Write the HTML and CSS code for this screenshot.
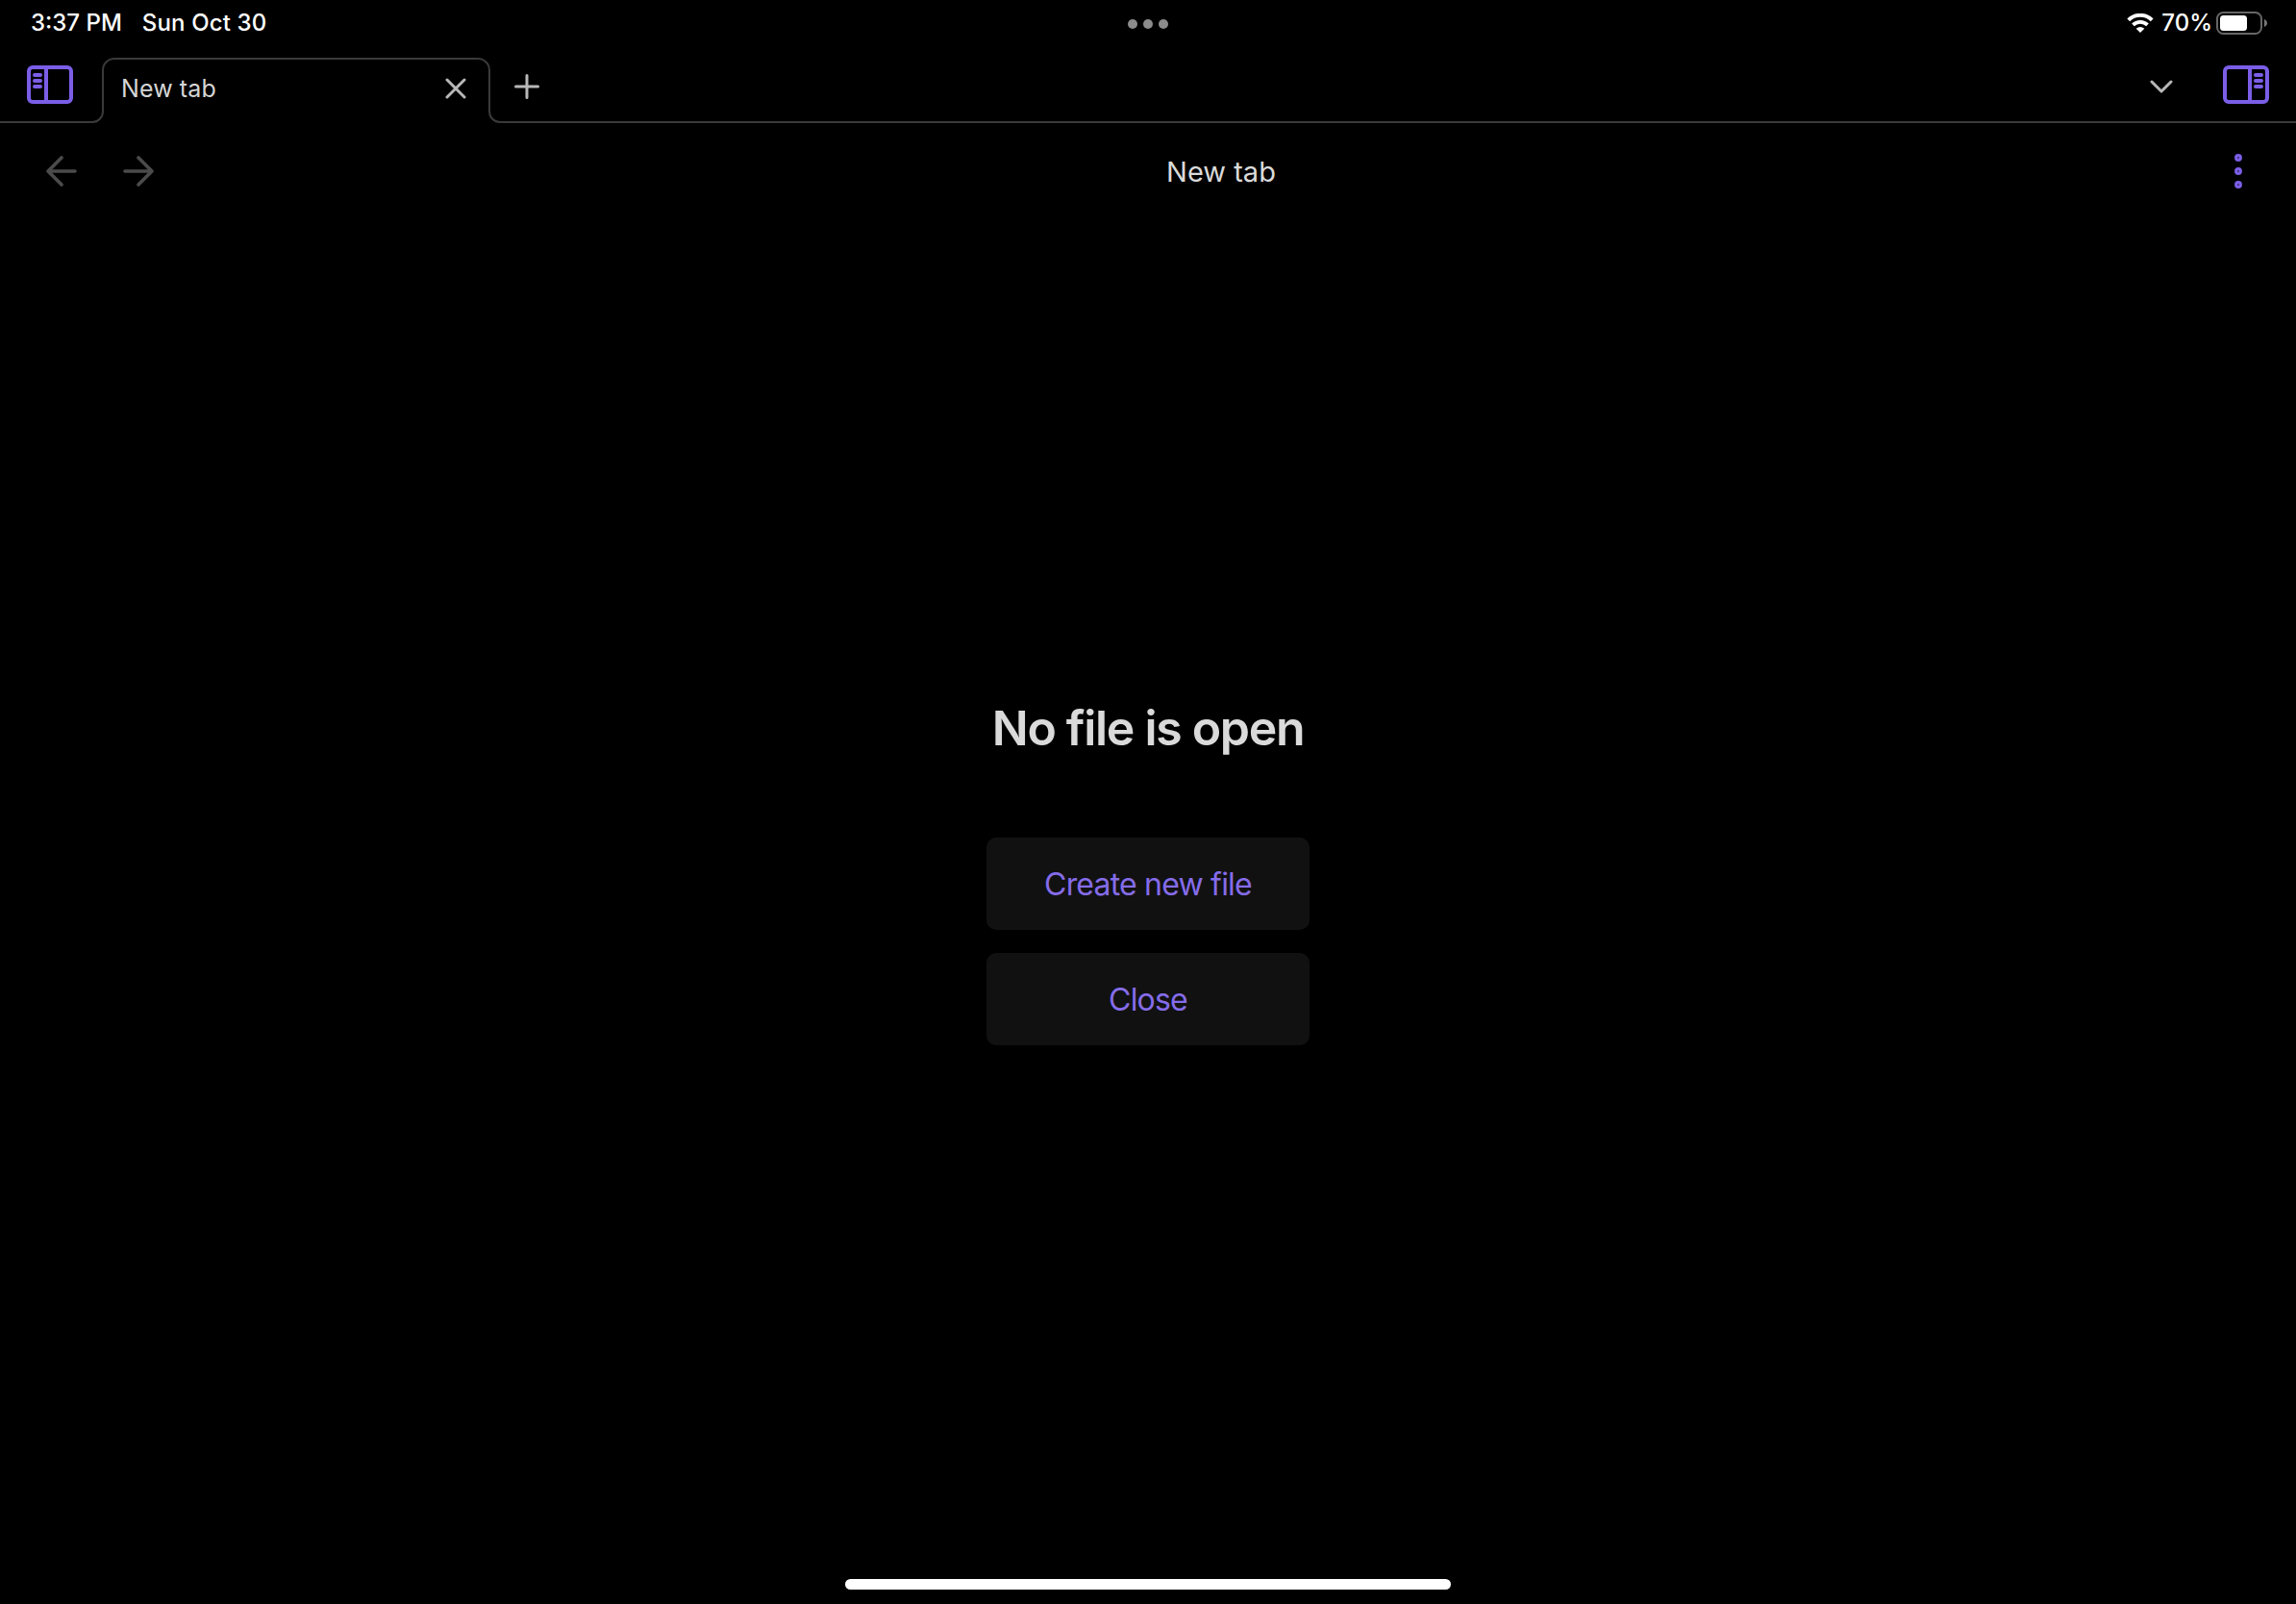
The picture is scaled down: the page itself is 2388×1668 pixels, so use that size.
FILE: index.html
```html
<!DOCTYPE html>
<html lang="en">
<head>
<meta charset="utf-8">
<title>New tab</title>
<link rel="stylesheet" href="styles.css">
</head>
<body>
<header class="status">
  <div class="status-left"><span class="time">3:37 PM</span><span class="date">Sun Oct 30</span></div>
  <svg class="multitask" viewBox="0 0 42 10"><circle cx="5" cy="5" r="5"/><circle cx="21" cy="5" r="5"/><circle cx="37" cy="5" r="5"/></svg>
  <div class="status-right">
    <svg class="wifi" width="28" height="20" viewBox="0 0 28 20"><path d="M1.800 6.900A17.300 17.300 0 0 1 26.200 6.900" stroke-width="4"/><path d="M6.500 11.900a10.700 10.700 0 0 1 15 0" stroke-width="3.800"/><path class="solid" d="M14 20l-4.300-4.200q4.300-3.500 8.600 0z"/></svg>
    <span class="percent">70%</span>
    <svg class="battery" width="54" height="24" viewBox="0 0 54 24"><rect class="shell" x="1" y="1" width="46" height="22" rx="6.5"/><rect class="charge" x="4" y="4" width="28" height="16" rx="3.5"/><path class="nub" d="M50 8c4 1.500 4 6.500 0 8z"/></svg>
  </div>
</header>
<nav class="tabs">
  <svg class="outline" width="2388" height="68" viewBox="0 0 2388 68"><path d="M0 67H96a11 11 0 0 0 11-11V13a12 12 0 0 1 12-12H497a12 12 0 0 1 12 12V56a11 11 0 0 0 11 11H2388"/></svg>
  <svg class="icon accent sidebar" width="48" height="40" viewBox="0 0 48 40"><rect x="2" y="2" width="44" height="36" rx="4"/><path d="M20 2v36M8 10h6M8 16h6M8 22h6"/></svg>
  <div class="tab"><span class="tab-name">New tab</span>
    <svg class="icon" width="22" height="22" viewBox="0 0 22 22"><path d="M2 2l18 18M20 2L2 20"/></svg>
  </div>
  <svg class="icon plus" width="26" height="26" viewBox="0 0 26 26"><path d="M13 1.500v23M1.500 13h23"/></svg>
  <svg class="icon chevron" width="24" height="14" viewBox="0 0 24 14"><path d="M2 2l10 10L22 2"/></svg>
  <svg class="icon accent" width="48" height="40" viewBox="0 0 48 40"><rect x="2" y="2" width="44" height="36" rx="4"/><path d="M28 2v36M34 10h6M34 16h6M34 22h6"/></svg>
</nav>
<div class="view-header">
  <div class="history">
    <svg class="icon muted" width="32" height="32" viewBox="0 0 32 32"><path d="M30 16H2M16 2L2 16l14 14"/></svg>
    <svg class="icon muted" width="32" height="32" viewBox="0 0 32 32"><path d="M2 16h28M16 2l14 14-14 14"/></svg>
  </div>
  <span class="title">New tab</span>
  <svg class="icon accent more" width="8" height="36" viewBox="0 0 8 36"><circle cx="4" cy="4" r="2.350"/><circle cx="4" cy="18" r="2.350"/><circle cx="4" cy="32" r="2.350"/></svg>
</div>
<main class="empty">
  <h1>No file is open</h1>
  <button>Create new file</button>
  <button>Close</button>
</main>
<footer class="home"><div class="home-bar"></div></footer>
</body>
</html>
```
FILE: styles.css
```css
* { box-sizing: border-box; }
body {
  margin: 0;
  height: 1668px;
  display: flex;
  flex-direction: column;
  overflow: hidden;
  background: #000;
  color: #dadada;
  font-family: Inter, "Liberation Sans", sans-serif;
}
svg { display: block; flex: none; }
span { white-space: nowrap; }
.status {
  height: 60px;
  display: grid;
  grid-template-columns: 1fr 42px 1fr;
  padding: 0 30px 0 32px;
  color: #fff;
  font-size: 24px;
  font-weight: 500;
  line-height: 30px;
}
.status-left { display: flex; padding-top: 9px; gap: 21px; }
.date { letter-spacing: 0.15px; }
.multitask { width: 42px; height: 10px; margin-top: 20px; margin-left: -1px; fill: #8c8c8c; }
.status-right { display: flex; justify-content: flex-end; align-items: flex-start; }
.wifi { margin: 14px 8px 0 0; fill: none; stroke: #fff; }
.wifi .solid { fill: #fff; stroke: none; }
.percent { margin: 9px 4px 0 0; }
.battery { margin-top: 12px; margin-right: -1px; }
.shell { fill: none; stroke: #666; stroke-width: 2; }
.charge { fill: #fff; }
.nub { fill: #777; }
.tabs { position: relative; height: 68px; display: flex; align-items: flex-start; padding: 8px 28px 0; }
.outline { position: absolute; left: 0; top: 0; fill: none; stroke: #3a3a3a; stroke-width: 2; }
.icon { fill: none; stroke: #b8b8b8; stroke-width: 3; stroke-linecap: round; stroke-linejoin: round; }
.accent { stroke: #7b5ee7; stroke-width: 4; }
.muted { stroke: #4b4b4b; stroke-width: 3.6; }
.tab { width: 402px; height: 60px; margin-left: 31px; padding: 0 24px 0 19px; display: flex; align-items: flex-start; justify-content: space-between; }
.tab-name { font-size: 25px; line-height: 32px; padding-top: 8px; letter-spacing: 0.1px; color: #d5d5d5; }
.tab .icon { margin-top: 13px; }
.plus { margin: 9px 0 0 26px; }
.chevron { margin: 15px 52px 0 auto; }
.view-header { height: 100px; display: grid; grid-template-columns: 1fr auto 1fr; align-items: center; padding: 0 56px 0 48px; }
.history { display: flex; gap: 48px; }
.title { font-size: 29px; line-height: 36px; margin: 2px 0 0 160px; }
.more { justify-self: end; stroke-width: 3.2; }
.empty { flex: 1; display: flex; flex-direction: column; align-items: center; padding-top: 499px; gap: 24px; }
h1 { margin: 0 0 60px; font-size: 50px; font-weight: 600; line-height: 60px; letter-spacing: -1.3px; white-space: nowrap; }
button { width: 336px; height: 96px; padding: 1px 0 0; border: 0; border-radius: 10px; background: #111; color: #856ce9; font: 400 32px/40px Inter, "Liberation Sans", sans-serif; letter-spacing: -0.8px; }
.home { height: 26px; display: flex; justify-content: center; }
.home-bar { width: 630px; height: 11px; border-radius: 6px; background: #fff; }
```
